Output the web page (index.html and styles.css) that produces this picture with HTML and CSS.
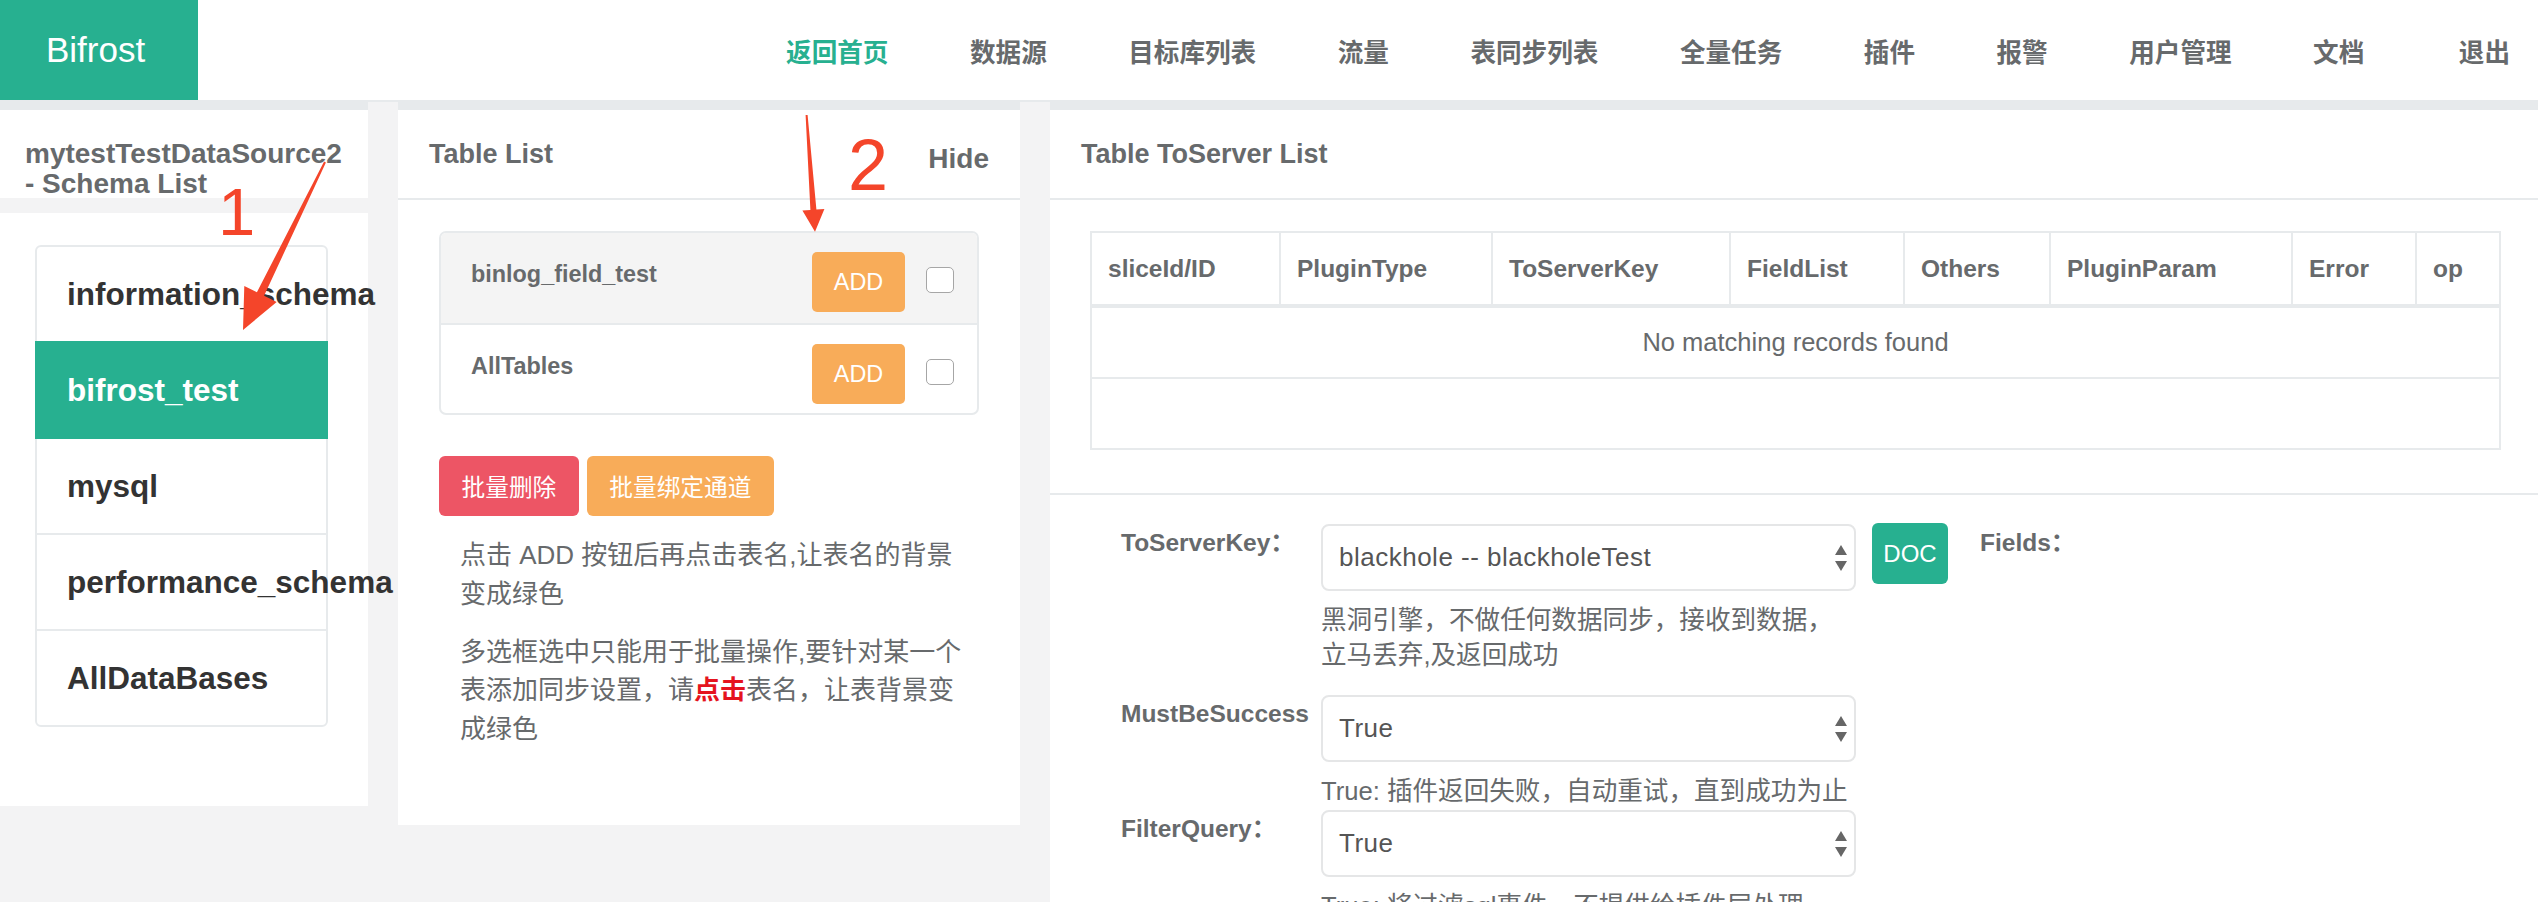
FILE: index.html
```html
<!DOCTYPE html>
<html lang="zh-CN">
<head>
<meta charset="utf-8">
<title>Bifrost</title>
<link rel="stylesheet" href="styles.css">
</head>
<body>
<header class="topbar">
  <div class="brand">Bifrost</div>
  <nav class="nav">
    <a class="nav-item active">返回首页</a>
    <a class="nav-item">数据源</a>
    <a class="nav-item">目标库列表</a>
    <a class="nav-item">流量</a>
    <a class="nav-item">表同步列表</a>
    <a class="nav-item">全量任务</a>
    <a class="nav-item">插件</a>
    <a class="nav-item">报警</a>
    <a class="nav-item">用户管理</a>
    <a class="nav-item">文档</a>
    <a class="nav-item logout">退出</a>
  </nav>
</header>

<main class="main">
  <section class="panel panel-schema">
    <div class="panel-title panel-title-left">
      <h5>mytestTestDataSource2 - Schema List</h5>
    </div>
    <div class="panel-body schema-body">
      <ul class="list-group">
        <li class="list-item">information_schema</li>
        <li class="list-item active">bifrost_test</li>
        <li class="list-item">mysql</li>
        <li class="list-item">performance_schema</li>
        <li class="list-item">AllDataBases</li>
      </ul>
    </div>
  </section>

  <section class="panel panel-tables">
    <div class="panel-title">
      <h5>Table List</h5>
      <span class="hide-link">Hide</span>
    </div>
    <div class="panel-body tables-body">
      <div class="table-box">
        <div class="table-row selected">
          <span class="table-name">binlog_field_test</span>
          <button class="btn btn-warning btn-add">ADD</button>
          <span class="checkbox"></span>
        </div>
        <div class="table-row">
          <span class="table-name">AllTables</span>
          <button class="btn btn-warning btn-add">ADD</button>
          <span class="checkbox"></span>
        </div>
      </div>
      <div class="batch-actions">
        <button class="btn btn-danger btn-batch">批量删除</button>
        <button class="btn btn-warning btn-batch">批量绑定通道</button>
      </div>
      <div class="tips">
        <p>点击 ADD 按钮后再点击表名,让表名的背景变成绿色</p>
        <p>多选框选中只能用于批量操作,要针对某一个表添加同步设置，请<b class="hl">点击</b>表名，让表背景变成绿色</p>
      </div>
    </div>
  </section>

  <section class="panel panel-server">
    <div class="panel-title">
      <h5>Table ToServer List</h5>
    </div>
    <div class="panel-body server-table-section">
      <div class="data-table">
        <div class="dt-head">
          <div class="dt-th">sliceId/ID</div>
          <div class="dt-th">PluginType</div>
          <div class="dt-th">ToServerKey</div>
          <div class="dt-th">FieldList</div>
          <div class="dt-th">Others</div>
          <div class="dt-th">PluginParam</div>
          <div class="dt-th">Error</div>
          <div class="dt-th">op</div>
        </div>
        <div class="dt-row">No matching records found</div>
        <div class="dt-row dt-row-last"></div>
      </div>
    </div>
    <div class="form-section">
      <div class="form-row form-row-gap-lg">
        <label class="form-label">ToServerKey：</label>
        <div class="form-field">
          <div class="select">
            <span class="select-text">blackhole -- blackholeTest</span>
            <svg class="select-arrows" width="12" height="26" viewBox="0 0 12 26"><polygon points="6,0 12,10 0,10"/><polygon points="0,16 12,16 6,26"/></svg>
          </div>
          <p class="help">黑洞引擎，不做任何数据同步，接收到数据，立马丢弃,及返回成功</p>
        </div>
        <button class="btn btn-doc">DOC</button>
        <label class="form-label fields-label">Fields：</label>
      </div>
      <div class="form-row form-row-gap-sm">
        <label class="form-label">MustBeSuccess</label>
        <div class="form-field">
          <div class="select">
            <span class="select-text">True</span>
            <svg class="select-arrows" width="12" height="26" viewBox="0 0 12 26"><polygon points="6,0 12,10 0,10"/><polygon points="0,16 12,16 6,26"/></svg>
          </div>
          <p class="help">True: 插件返回失败，自动重试，直到成功为止</p>
        </div>
      </div>
      <div class="form-row">
        <label class="form-label">FilterQuery：</label>
        <div class="form-field">
          <div class="select">
            <span class="select-text">True</span>
            <svg class="select-arrows" width="12" height="26" viewBox="0 0 12 26"><polygon points="6,0 12,10 0,10"/><polygon points="0,16 12,16 6,26"/></svg>
          </div>
          <p class="help">True: 将过滤sql事件，不提供给插件层处理</p>
        </div>
      </div>
    </div>
  </section>
</main>

<div class="annotations">
  <svg class="annot-svg" width="2538" height="902" viewBox="0 0 2538 902">
    <polygon points="325.9,162.4 264.1,295.8 276.7,301.9 243,330 244.3,286.1 256.9,292.2 324.1,161.6"/>
    <polygon points="807.6,114.9 816.4,209.6 824.4,209.0 815,231.7 802.4,210.6 810.4,210.0 805.6,115.1"/>
  </svg>
  <span class="annot-num annot-one">1</span>
  <span class="annot-num annot-two">2</span>
</div>
</body>
</html>
```

FILE: styles.css
```css
* {
  box-sizing: border-box;
}

html,
body {
  margin: 0;
  padding: 0;
  overflow: hidden;
}

body {
  position: relative;
  width: 2538px;
  height: 902px;
  background: #f3f3f4;
  font-family: "Liberation Sans", "Noto Sans CJK SC", sans-serif;
  color: #676a6c;
}

/* ---------- top bar ---------- */
.topbar {
  display: flex;
  height: 102px;
  background: #fff;
  border-bottom: 2px solid #e7eaec;
}

.brand {
  width: 198px;
  height: 100px;
  background: #27b090;
  color: #fff;
  font-size: 35px;
  display: flex;
  align-items: center;
  padding-left: 46px;
}

.nav {
  margin-left: auto;
  display: flex;
  align-items: center;
  gap: 81.5px;
  padding-right: 28px;
}

.nav-item {
  font-size: 25.6px;
  font-weight: 700;
  color: #676a6c;
  text-decoration: none;
}

.nav-item.active {
  color: #27b090;
}

.nav-item.logout {
  margin-left: 13px;
}

/* ---------- panels ---------- */
.main {
  display: flex;
  align-items: flex-start;
  gap: 30px;
}

.panel {
  border-top: 8px solid #e7eaec;
}

.panel-schema {
  width: 368px;
}

.panel-tables {
  width: 622px;
}

.panel-server {
  flex: 1;
  min-height: 800px;
  background: #fff;
}

.panel-title {
  height: 90px;
  background: #fff;
  border-bottom: 2px solid #e7eaec;
  padding: 29px 31px 0;
  display: flex;
  justify-content: space-between;
  align-items: flex-start;
}

.panel-title h5 {
  margin: 0;
  font-size: 27px;
  line-height: 30px;
  font-weight: bold;
  color: #676a6c;
}

.panel-title-left {
  height: 88px;
  border-bottom: 0;
  padding-left: 25px;
  padding-right: 10px;
}

.panel-title-left h5 {
  font-size: 28px;
}

.hide-link {
  font-size: 28px;
  line-height: 30px;
  font-weight: bold;
  padding-top: 5px;
  color: #676a6c;
}

.panel-body {
  background: #fff;
}

/* ---------- schema list ---------- */
.schema-body {
  margin-top: 15px;
  padding: 32px 40px 79px 35px;
}

.list-group {
  list-style: none;
  margin: 0;
  padding: 0;
}

.list-item {
  position: relative;
  height: 98px;
  margin-bottom: -2px;
  border: 2px solid #e7eaec;
  padding: 29px 0 0 30px;
  font-size: 31.5px;
  line-height: 36px;
  font-weight: bold;
  color: #333;
  white-space: nowrap;
  background: #fff;
}

.list-item:first-child {
  border-radius: 6px 6px 0 0;
}

.list-item:last-child {
  margin-bottom: 0;
  border-radius: 0 0 6px 6px;
}

.list-item.active {
  z-index: 2;
  background: #27b090;
  border-color: #27b090;
  color: #fff;
}

/* ---------- table list ---------- */
.tables-body {
  padding: 31px 41px 57px;
}

.table-box {
  border: 2px solid #e7eaec;
  border-radius: 7px;
}

.table-row {
  display: flex;
  align-items: flex-start;
  height: 88px;
  padding: 0 23px 0 30px;
}

.table-row + .table-row {
  border-top: 2px solid #e7eaec;
  height: 90px;
}

.table-row.selected {
  height: 90px;
  background: #f4f4f4;
  border-radius: 5px 5px 0 0;
}

.table-name {
  flex: 1;
  margin-top: 27px;
  font-size: 23.4px;
  line-height: 28px;
  font-weight: bold;
  color: #676a6c;
}

.btn {
  border: 0;
  border-radius: 6px;
  color: #fff;
  font-family: inherit;
  display: inline-flex;
  align-items: center;
  justify-content: center;
  padding: 0;
  cursor: pointer;
}

.btn-warning {
  background: #f8ac59;
}

.btn-danger {
  background: #ed5565;
}

.btn-add {
  margin-top: 19px;
  width: 93px;
  height: 60px;
  border-radius: 5px;
  font-size: 23.4px;
}

.checkbox {
  margin-top: 34px;
  margin-left: 21px;
  width: 28px;
  height: 26px;
  border: 1.5px solid #a6a6a6;
  border-radius: 5px;
  background: #fff;
}

.batch-actions {
  display: flex;
  gap: 8px;
  margin-top: 41px;
}

.btn-batch {
  height: 60px;
  padding: 0 22.5px;
  font-size: 23.7px;
}

.tips {
  margin: 20px 0 0 21px;
  width: 512px;
}

.tips p {
  margin: 0 0 19.5px;
  font-size: 26px;
  line-height: 38.5px;
  color: #676a6c;
}

.tips .hl {
  color: #e5141e;
}

/* ---------- server list ---------- */
.server-table-section {
  padding: 31px 37px 43px 40px;
  border-bottom: 2px solid #e7eaec;
}

.data-table {
  border: 2px solid #e7eaec;
}

.dt-head {
  display: grid;
  grid-template-columns: 187px 212px 238px 174px 146px 242px 124px 84px;
  height: 75px;
  border-bottom: 4px solid #e7eaec;
}

.dt-th {
  display: flex;
  align-items: center;
  padding-left: 16px;
  font-size: 24.5px;
  font-weight: bold;
  color: #676a6c;
  white-space: nowrap;
}

.dt-th + .dt-th {
  border-left: 2px solid #e7eaec;
}

.dt-row {
  height: 71px;
  border-bottom: 2px solid #e7eaec;
  display: flex;
  align-items: center;
  justify-content: center;
  font-size: 25.5px;
  color: #676a6c;
}

.dt-row-last {
  height: 69px;
  border-bottom: 0;
}

.form-section {
  padding: 29px 0 0 71px;
}

.form-row {
  display: flex;
  align-items: flex-start;
}

.form-row-gap-lg {
  margin-bottom: 22px;
}

.form-row-gap-sm {
  margin-bottom: 1px;
}

.form-label {
  width: 200px;
  flex: none;
  padding-top: 5px;
  font-size: 24.5px;
  line-height: 28px;
  font-weight: bold;
  color: #676a6c;
  white-space: nowrap;
}

.form-field {
  width: 535px;
  flex: none;
}

.select {
  height: 67px;
  border: 2px solid #e5e6e7;
  border-radius: 8px;
  background: #fff;
  display: flex;
  align-items: center;
  justify-content: space-between;
  padding: 0 7px 0 16px;
}

.select-text {
  font-size: 26px;
  letter-spacing: 0.5px;
  color: #555;
}

.select-arrows {
  fill: #666;
}

.help {
  margin: 12px 0 0;
  font-size: 25.6px;
  line-height: 35px;
  color: #676a6c;
}

.btn-doc {
  margin-left: 16px;
  margin-top: -1px;
  width: 76px;
  height: 61px;
  background: #27b090;
  font-size: 24px;
}

.fields-label {
  width: auto;
  margin-left: 32px;
}

/* ---------- screenshot annotations ---------- */
.annotations {
  position: absolute;
  top: 0;
  left: 0;
  width: 2538px;
  height: 902px;
  pointer-events: none;
}

.annot-svg {
  position: absolute;
  top: 0;
  left: 0;
  fill: #f4452a;
}

.annot-num {
  position: absolute;
  color: #f4452a;
  font-family: "Liberation Sans", sans-serif;
  line-height: 1;
}

.annot-one {
  left: 218px;
  top: 178px;
  font-size: 67px;
}

.annot-two {
  left: 848px;
  top: 129px;
  font-size: 72px;
}
```
